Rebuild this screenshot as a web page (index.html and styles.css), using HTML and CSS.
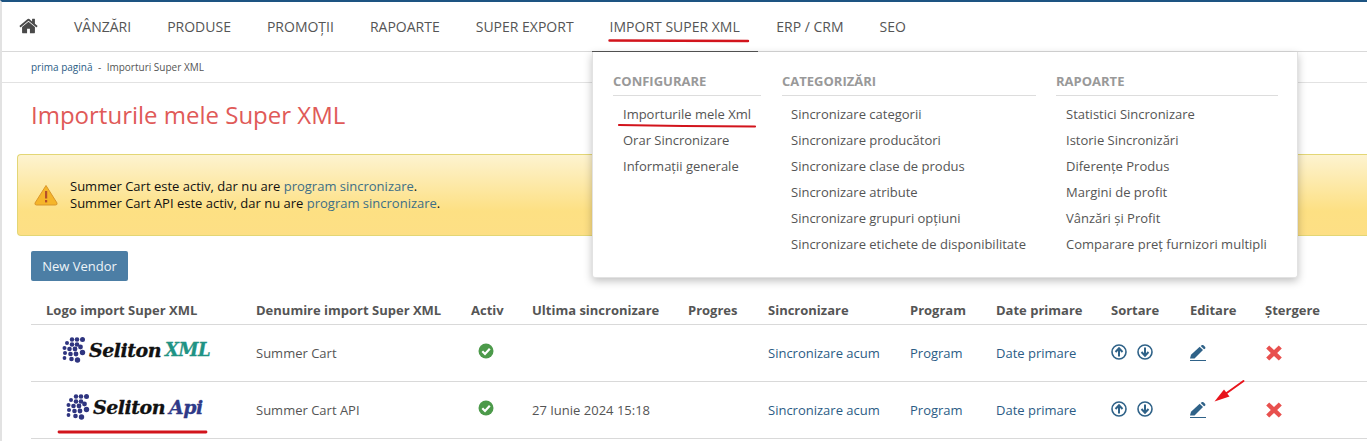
FILE: index.html
```html
<!DOCTYPE html>
<html lang="ro">
<head>
<meta charset="utf-8">
<title>Importurile mele Super XML</title>
<link rel="stylesheet" href="styles.css">
</head>
<body>
<div class="page">
  <nav class="nav">
    <a class="home" href="#"><svg viewBox="0 0 1664 1792" width="19" height="20"><path fill="#4a4a4a" d="M1408 992v480q0 26-19 45t-45 19h-384v-384h-256v384h-384q-26 0-45-19t-19-45v-480q0-1 .5-3t.5-3l575-474 575 474q1 2 1 6zm223-69l-62 74q-8 9-21 11h-3q-13 0-21-7l-692-577-692 577q-12 8-24 7-13-2-21-11l-62-74q-8-10-7-23.500t11-21.500l719-599q32-26 76-26t76 26l244 204v-195q0-14 9-23t23-9h192q14 0 23 9t9 23v408l219 182q10 8 11 21.500t-7 23.500z"/></svg></a>
    <a class="nav-item" href="#">VÂNZĂRI</a>
    <a class="nav-item" href="#">PRODUSE</a>
    <a class="nav-item" href="#">PROMOŢII</a>
    <a class="nav-item" href="#">RAPOARTE</a>
    <a class="nav-item" href="#">SUPER EXPORT</a>
    <a class="nav-item active" href="#">IMPORT SUPER XML</a>
    <a class="nav-item" href="#">ERP / CRM</a>
    <a class="nav-item" href="#">SEO</a>
  </nav>

  <div class="crumbs"><a href="#">prima pagină</a><span class="sep">-</span><span>Importuri Super XML</span></div>

  <h1 class="title">Importurile mele Super XML</h1>

  <div class="alert">
    <svg class="alert-icon" viewBox="0 0 24 22" width="24" height="22"><path d="M12 1.500 L23 19 Q23.500 21 21.500 21 H2.500 Q.5 21 1 19 Z" fill="#f5b52a" stroke="#d9962a" stroke-width="1"/><rect x="11" y="7" width="2.200" height="7.500" fill="#b5502a"/><rect x="11" y="16" width="2.200" height="2.400" fill="#b5502a"/></svg>
    <div>
      <div>Summer Cart este activ, dar nu are <a href="#">program sincronizare</a>.</div>
      <div>Summer Cart API este activ, dar nu are <a href="#">program sincronizare</a>.</div>
    </div>
  </div>

  <a class="btn" href="#">New Vendor</a>

  <table class="grid">
    <colgroup>
      <col class="c1"><col class="c2"><col class="c3"><col class="c4"><col class="c5"><col class="c6"><col class="c7"><col class="c8"><col class="c9"><col class="c10"><col>
    </colgroup>
    <thead>
      <tr><th>Logo import Super XML</th><th>Denumire import Super XML</th><th>Activ</th><th>Ultima sincronizare</th><th>Progres</th><th>Sincronizare</th><th>Program</th><th>Date primare</th><th>Sortare</th><th>Editare</th><th>Ştergere</th></tr>
    </thead>
    <tbody>
      <tr>
        <td class="logo-cell"><div class="logo logo-xml"><svg class="dots" viewBox="0 0 24 26" width="24" height="26"><use href="#dotset"/></svg><span class="brand">Seliton</span><span class="brand-sub xml">XML</span></div></td>
        <td>Summer Cart</td>
        <td><svg class="ico" viewBox="0 0 16 16" width="16" height="16"><use href="#ok"/></svg></td>
        <td></td><td></td>
        <td><a href="#">Sincronizare acum</a></td><td><a href="#">Program</a></td><td><a href="#">Date primare</a></td>
        <td><span class="sort"><svg viewBox="0 0 16 16" width="16" height="16"><use href="#up"/></svg><svg viewBox="0 0 16 16" width="16" height="16"><use href="#down"/></svg></span></td>
        <td><svg class="ico pen" viewBox="0 0 16 16" width="16" height="16"><use href="#pen"/></svg></td>
        <td><svg class="ico del" viewBox="0 0 16 16" width="16" height="16"><use href="#x"/></svg></td>
      </tr>
      <tr>
        <td class="logo-cell"><div class="logo logo-api"><svg class="dots" viewBox="0 0 24 26" width="24" height="26"><use href="#dotset"/></svg><span class="brand">Seliton</span><span class="brand-sub api">Api</span></div></td>
        <td>Summer Cart API</td>
        <td><svg class="ico" viewBox="0 0 16 16" width="16" height="16"><use href="#ok"/></svg></td>
        <td>27 Iunie 2024 15:18</td><td></td>
        <td><a href="#">Sincronizare acum</a></td><td><a href="#">Program</a></td><td><a href="#">Date primare</a></td>
        <td><span class="sort"><svg viewBox="0 0 16 16" width="16" height="16"><use href="#up"/></svg><svg viewBox="0 0 16 16" width="16" height="16"><use href="#down"/></svg></span></td>
        <td><svg class="ico pen" viewBox="0 0 16 16" width="16" height="16"><use href="#pen"/></svg></td>
        <td><svg class="ico del" viewBox="0 0 16 16" width="16" height="16"><use href="#x"/></svg></td>
      </tr>
    </tbody>
  </table>

  <div class="menu">
    <div class="menu-col">
      <h4>CONFIGURARE</h4>
      <a href="#">Importurile mele Xml</a>
      <a href="#">Orar Sincronizare</a>
      <a href="#">Informaţii generale</a>
    </div>
    <div class="menu-col">
      <h4>CATEGORIZĂRI</h4>
      <a href="#">Sincronizare categorii</a>
      <a href="#">Sincronizare producători</a>
      <a href="#">Sincronizare clase de produs</a>
      <a href="#">Sincronizare atribute</a>
      <a href="#">Sincronizare grupuri opţiuni</a>
      <a href="#">Sincronizare etichete de disponibilitate</a>
    </div>
    <div class="menu-col">
      <h4>RAPOARTE</h4>
      <a href="#">Statistici Sincronizare</a>
      <a href="#">Istorie Sincronizări</a>
      <a href="#">Diferenţe Produs</a>
      <a href="#">Margini de profit</a>
      <a href="#">Vânzări şi Profit</a>
      <a href="#">Comparare preţ furnizori multipli</a>
    </div>
  </div>

  <svg class="marks" width="1367" height="441" viewBox="0 0 1367 441">
    <g stroke="#d2141c" stroke-linecap="round" fill="none">
      <path d="M609.500 40.500 L748 41" stroke-width="2.400"/>
      <path d="M619 125 Q680 126 755 126.500" stroke-width="2.200"/>
      <path d="M59 432 H206" stroke-width="2.800"/>
    </g>
    <path d="M1243.500 381 L1226 393.500" stroke="#e8141c" stroke-width="2" stroke-linecap="round"/>
    <path d="M1214.500 401.500 L1224 389.500 L1229.500 396.500 Z" fill="#e8141c"/>
  </svg>

  <svg class="defs" width="0" height="0">
    <defs>
      <g id="dotset" fill="#2f3580">
        <circle cx="10" cy="2.500" r="2.200"/><circle cx="15" cy="2.500" r="2.300"/><circle cx="20.500" cy="2.500" r="2.500"/>
        <circle cx="5" cy="6" r="2"/><circle cx="10" cy="7.500" r="2.300"/><circle cx="15" cy="7.500" r="2.300"/>
        <circle cx="2.500" cy="11" r="2"/><circle cx="7.500" cy="12" r="2.300"/><circle cx="13" cy="12" r="2.400"/><circle cx="18.500" cy="10" r="2.400"/>
        <circle cx="3" cy="16" r="2"/><circle cx="8.500" cy="17" r="2.300"/><circle cx="14" cy="17" r="2.400"/><circle cx="20.500" cy="15.500" r="2.700"/>
        <circle cx="2.500" cy="21" r="1.900"/><circle cx="9.500" cy="22" r="2.300"/><circle cx="15.500" cy="23" r="2.700"/>
      </g>
      <g id="ok"><circle cx="8" cy="8" r="7.500" fill="#4c9a4a"/><path d="M4.300 8.300 L7 11 L11.800 5.800" fill="none" stroke="#fff" stroke-width="2.200"/></g>
      <g id="up" fill="none" stroke="#2f6288"><circle cx="8" cy="8" r="7" stroke-width="1.600"/><path d="M8 12.500 V4.500 M4.500 8 L8 4.300 L11.500 8" stroke-width="2"/></g>
      <g id="down" fill="none" stroke="#2f6288"><circle cx="8" cy="8" r="7" stroke-width="1.600"/><path d="M8 3.500 V11.500 M4.500 8 L8 11.700 L11.500 8" stroke-width="2"/></g>
      <g id="pen" fill="#2f6288"><path d="M0 13.500 L1 9.700 L9.700 1.800 L13 5 L4.500 13.500 Z"/><path d="M10.700 .9 L12 0 Q13 -.3 14 .7 L15 1.800 Q15.800 2.800 15 3.800 L14 4.200 Z"/><rect x="0" y="15" width="16" height="1"/></g>
      <path id="x" fill="#e8504e" d="M3.200 .5 L8 5 L12.800 .5 L15.800 3.500 L11.200 8 L15.800 12.500 L12.800 15.500 L8 11 L3.200 15.500 L.2 12.500 L4.800 8 L.2 3.500 Z"/>
    </defs>
  </svg>
</div>
</body>
</html>
```
FILE: styles.css
```css
* { box-sizing: border-box; }
html, body { margin: 0; padding: 0; background: #fff; }
body { font-family: "Open Sans", "Noto Sans", sans-serif; font-size: 13px; color: #555; overflow: hidden; }
a { text-decoration: none; color: #2b5c85; }

.page { position: relative; width: 1367px; height: 441px; overflow: hidden; border-top: 2px solid #1d5482; border-left: 2px solid #e2e2e2; }

.nav { display: flex; align-items: stretch; height: 50px; border-bottom: 1px solid #d9d9d9; }
.home { display: flex; align-items: center; width: 54px; padding: 0 0 1px 17px; }
.nav-item { display: flex; align-items: center; padding: 0 18px 1px; font-size: 14px; color: #555; white-space: nowrap; }
.nav-item.active { padding-right: 18.5px; box-shadow: 0 1px 0 #555; }

.crumbs { display: flex; height: 31px; align-items: center; padding-left: 29px; font-size: 10px; color: #555; border-bottom: 1px solid #e2e2e2; }
.crumbs .sep { margin: 0 5.500px; }

.title { margin: 0; padding: 14px 0 0 29px; height: 71px; font-size: 24px; line-height: 36px; font-weight: 400; color: #e05a58; }

.alert { display: flex; align-items: center; gap: 12px; height: 82px; margin-left: 15px; padding: 0 0 1px 16px; font-size: 13px; line-height: 17px; color: #111; border: 1px solid #e3d675; border-right: 0; border-radius: 4px 0 0 4px; background: linear-gradient(#fdf3d0, #fde083 70%, #fddf85); }
.alert a { color: #3d6f86; }
.alert-icon { flex: none; margin-top: 1px; }

.btn { display: inline-flex; align-items: center; justify-content: center; width: 97px; height: 30px; margin: 15px 0 0 29px; font-size: 13px; color: #eef4f8; background: #4c7ea5; border-radius: 2px; }

.grid { position: absolute; left: 29px; top: 289px; width: 1336px; table-layout: fixed; border-collapse: collapse; font-size: 13px; }
.c1 { width: 210px; } .c2 { width: 215px; } .c3 { width: 61px; } .c4 { width: 156px; } .c5 { width: 80px; }
.c6 { width: 142px; } .c7 { width: 86px; } .c8 { width: 115px; } .c9 { width: 79px; } .c10 { width: 75px; }
.grid th { height: 33px; padding: 5px 0 0 15px; text-align: left; font-weight: 700; color: #555; white-space: nowrap; border-bottom: 1px solid #d9d9d9; }
.grid td { height: 57px; padding: 0 0 0 15px; white-space: nowrap; vertical-align: middle; border-bottom: 1px solid #d9d9d9; }
.ico { display: block; margin-left: 7px; margin-top: -4px; }
.grid td .pen { margin-left: 0; margin-top: 0; }
.grid td .del { margin-left: 1px; margin-top: 0; }
.sort { display: flex; gap: 10px; margin-top: -1px; }

.logo-cell { overflow: visible; }
.logo { display: flex; align-items: center; margin-top: -5px; line-height: 26px; }
.logo-xml { margin-left: 16px; }
.logo-api { margin-left: 20px; }
.dots { flex: none; margin-right: 3px; }
.brand, .brand-sub { font-family: "DejaVu Serif", "Liberation Serif", serif; font-weight: 700; font-style: italic; font-size: 19px; letter-spacing: -.5px; color: #111; -webkit-text-stroke: .3px currentColor; }
.brand-sub { margin-left: 4px; }
.brand-sub.xml { color: #1f9384; font-size: 18px; letter-spacing: -.5px; }
.brand-sub.api { color: #2f3a88; }

.menu { position: absolute; left: 590px; top: 50px; width: 706px; height: 226px; display: grid; grid-template-columns: 148px 254px 221px; column-gap: 21px; padding: 15px 0 0 20px; background: #fff; border: 1px solid #e2e2e2; border-top: 0; border-radius: 0 0 3px 3px; box-shadow: 0 3px 8px rgba(0, 0, 0, .25); }
.menu h4 { margin: 0 0 5px; height: 29px; font-size: 13px; line-height: 28px; font-weight: 700; color: #999; border-bottom: 1px solid #ddd; }
.menu-col a { display: block; height: 26px; padding-left: 10px; font-size: 13px; line-height: 26px; color: #555; white-space: nowrap; }
.menu-col:nth-child(2) a { padding-left: 9px; }
.menu-col:nth-child(3) { margin-left: -1px; }

.marks { position: absolute; left: -2px; top: -2px; pointer-events: none; }
.defs { position: absolute; }
```
